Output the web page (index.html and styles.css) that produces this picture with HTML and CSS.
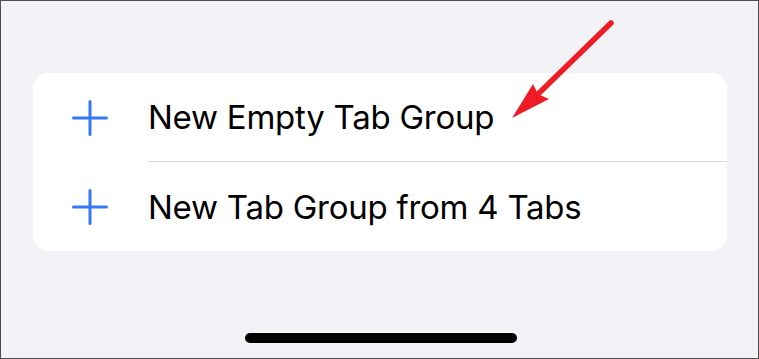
FILE: index.html
```html
<!DOCTYPE html>
<html lang="en">
<head>
<meta charset="utf-8">
<title>New Tab Group</title>
<link rel="stylesheet" href="styles.css">
</head>
<body>
<div class="screen">
  <div class="menu">
    <div class="row">
      <svg class="plus" viewBox="0 0 36 36" width="36" height="36" aria-hidden="true">
        <path d="M18 1.5V34.5M1.5 18H34.5" stroke="#3478f6" stroke-width="3" stroke-linecap="round" fill="none"/>
      </svg>
      <div class="label">New Empty Tab Group</div>
    </div>
    <div class="row">
      <svg class="plus" viewBox="0 0 36 36" width="36" height="36" aria-hidden="true">
        <path d="M18 1.5V34.5M1.5 18H34.5" stroke="#3478f6" stroke-width="3" stroke-linecap="round" fill="none"/>
      </svg>
      <div class="label">New Tab Group from 4 Tabs</div>
    </div>
  </div>
  <div class="home-bar"></div>
  <svg class="arrow" viewBox="0 0 759 359" width="759" height="359" aria-hidden="true">
    <line x1="611" y1="23" x2="536" y2="96" stroke="#ee1d25" stroke-width="5.5" stroke-linecap="round"/>
    <polygon points="512,118 533,84 538,94 549,99" fill="#ee1d25"/>
  </svg>
</div>
</body>
</html>
```
FILE: styles.css
```css
html, body {
  margin: 0;
  padding: 0;
}
body {
  background: #f2f2f7;
  font-family: "Inter", "Liberation Sans", sans-serif;
}
.screen {
  position: relative;
  box-sizing: border-box;
  width: 759px;
  height: 359px;
  border: 1px solid #4d4d4d;
  background: #f2f2f7;
  display: flex;
  flex-direction: column;
  padding: 72px 0 15px 32px;
  overflow: hidden;
}
.menu {
  width: 694px;
  background: #ffffff;
  border-radius: 15px;
  display: flex;
  flex-direction: column;
}
.row {
  display: flex;
  align-items: center;
  height: 89px;
  padding-left: 39px;
}
.row:first-child .label {
  border-bottom: 1px solid #d9d9dc;
}
.plus {
  flex: none;
  width: 36px;
  height: 36px;
  margin-right: 40px;
}
.label {
  flex: 1;
  align-self: stretch;
  display: flex;
  align-items: center;
  font-size: 33px;
  color: #000;
  letter-spacing: -0.25px;
}
.home-bar {
  margin-top: auto;
  align-self: flex-start;
  margin-left: 212px;
  width: 272px;
  height: 10px;
  border-radius: 5px;
  background: #000;
}
.arrow {
  position: absolute;
  left: -1px;
  top: -1px;
  pointer-events: none;
}
```
